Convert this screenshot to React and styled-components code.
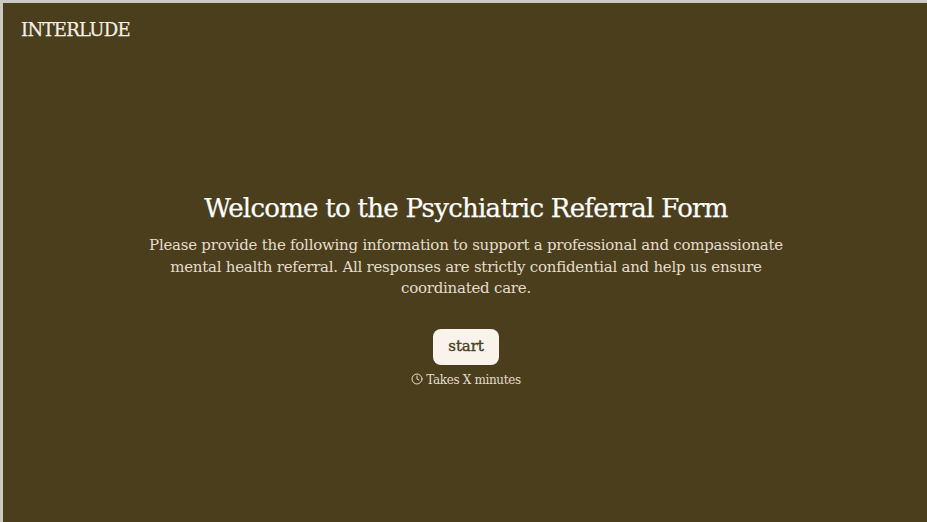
import styled, { createGlobalStyle } from "styled-components";
import { Clock } from "lucide-react";

const GlobalStyle = createGlobalStyle`
  html, body {
    margin: 0;
    height: 100%;
    background: #fff;
  }
  #root {
    height: 100%;
  }
`;

const Page = styled.div`
  box-sizing: border-box;
  height: 522px;
  overflow: hidden;
  border-top: 3px solid #c9c9c6;
  border-left: 3px solid #c9c9c6;
  background: #4a3e1c;
  display: flex;
  flex-direction: column;
  font-family: "DejaVu Serif", "Liberation Serif", serif;
`;

const Header = styled.header`
  padding: 14px 18px;
`;

const Logo = styled.div`
  font-size: 18px;
  line-height: 26px;
  color: #f5efe3;
  letter-spacing: -0.7px;
  -webkit-text-stroke: 0.25px #f5efe3;
`;

const Main = styled.main`
  display: flex;
  flex-direction: column;
  align-items: center;
  padding: 132px 0 0 2px;
`;

const Title = styled.h1`
  margin: 0 0 8px;
  font-size: 26px;
  line-height: 38px;
  font-weight: 400;
  letter-spacing: -0.72px;
  -webkit-text-stroke: 0.25px #fff;
  color: #fff;
`;

const Intro = styled.p`
  margin: 0 0 29px;
  width: 640px;
  font-size: 15px;
  line-height: 21.5px;
  letter-spacing: -0.25px;
  text-align: center;
  color: #e3dccc;
`;

const StartButton = styled.button`
  box-sizing: border-box;
  width: 66px;
  height: 36px;
  padding: 0 0 2px;
  border: 0;
  border-radius: 8px;
  background: #faf3ec;
  color: #4a3e1c;
  font-family: inherit;
  font-size: 15px;
  font-weight: 400;
  letter-spacing: -0.1px;
  -webkit-text-stroke: 0.4px #4a3e1c;
`;

const Duration = styled.div`
  display: flex;
  align-items: center;
  gap: 3px;
  margin-top: 7px;
  font-size: 12px;
  line-height: 16px;
  letter-spacing: -0.35px;
  color: #e3dccc;
`;

const DurationIcon = styled(Clock)`
  margin-top: -2px;
`;

export default function App() {
  return (
    <>
      <GlobalStyle />
      <Page>
        <Header>
          <Logo>INTERLUDE</Logo>
        </Header>
        <Main>
          <Title>Welcome to the Psychiatric Referral Form</Title>
          <Intro>
            Please provide the following information to support a professional and compassionate
            mental health referral. All responses are strictly confidential and help us ensure
            coordinated care.
          </Intro>
          <StartButton>start</StartButton>
          <Duration>
            <DurationIcon size={12} strokeWidth={2} />
            Takes X minutes
          </Duration>
        </Main>
      </Page>
    </>
  );
}
